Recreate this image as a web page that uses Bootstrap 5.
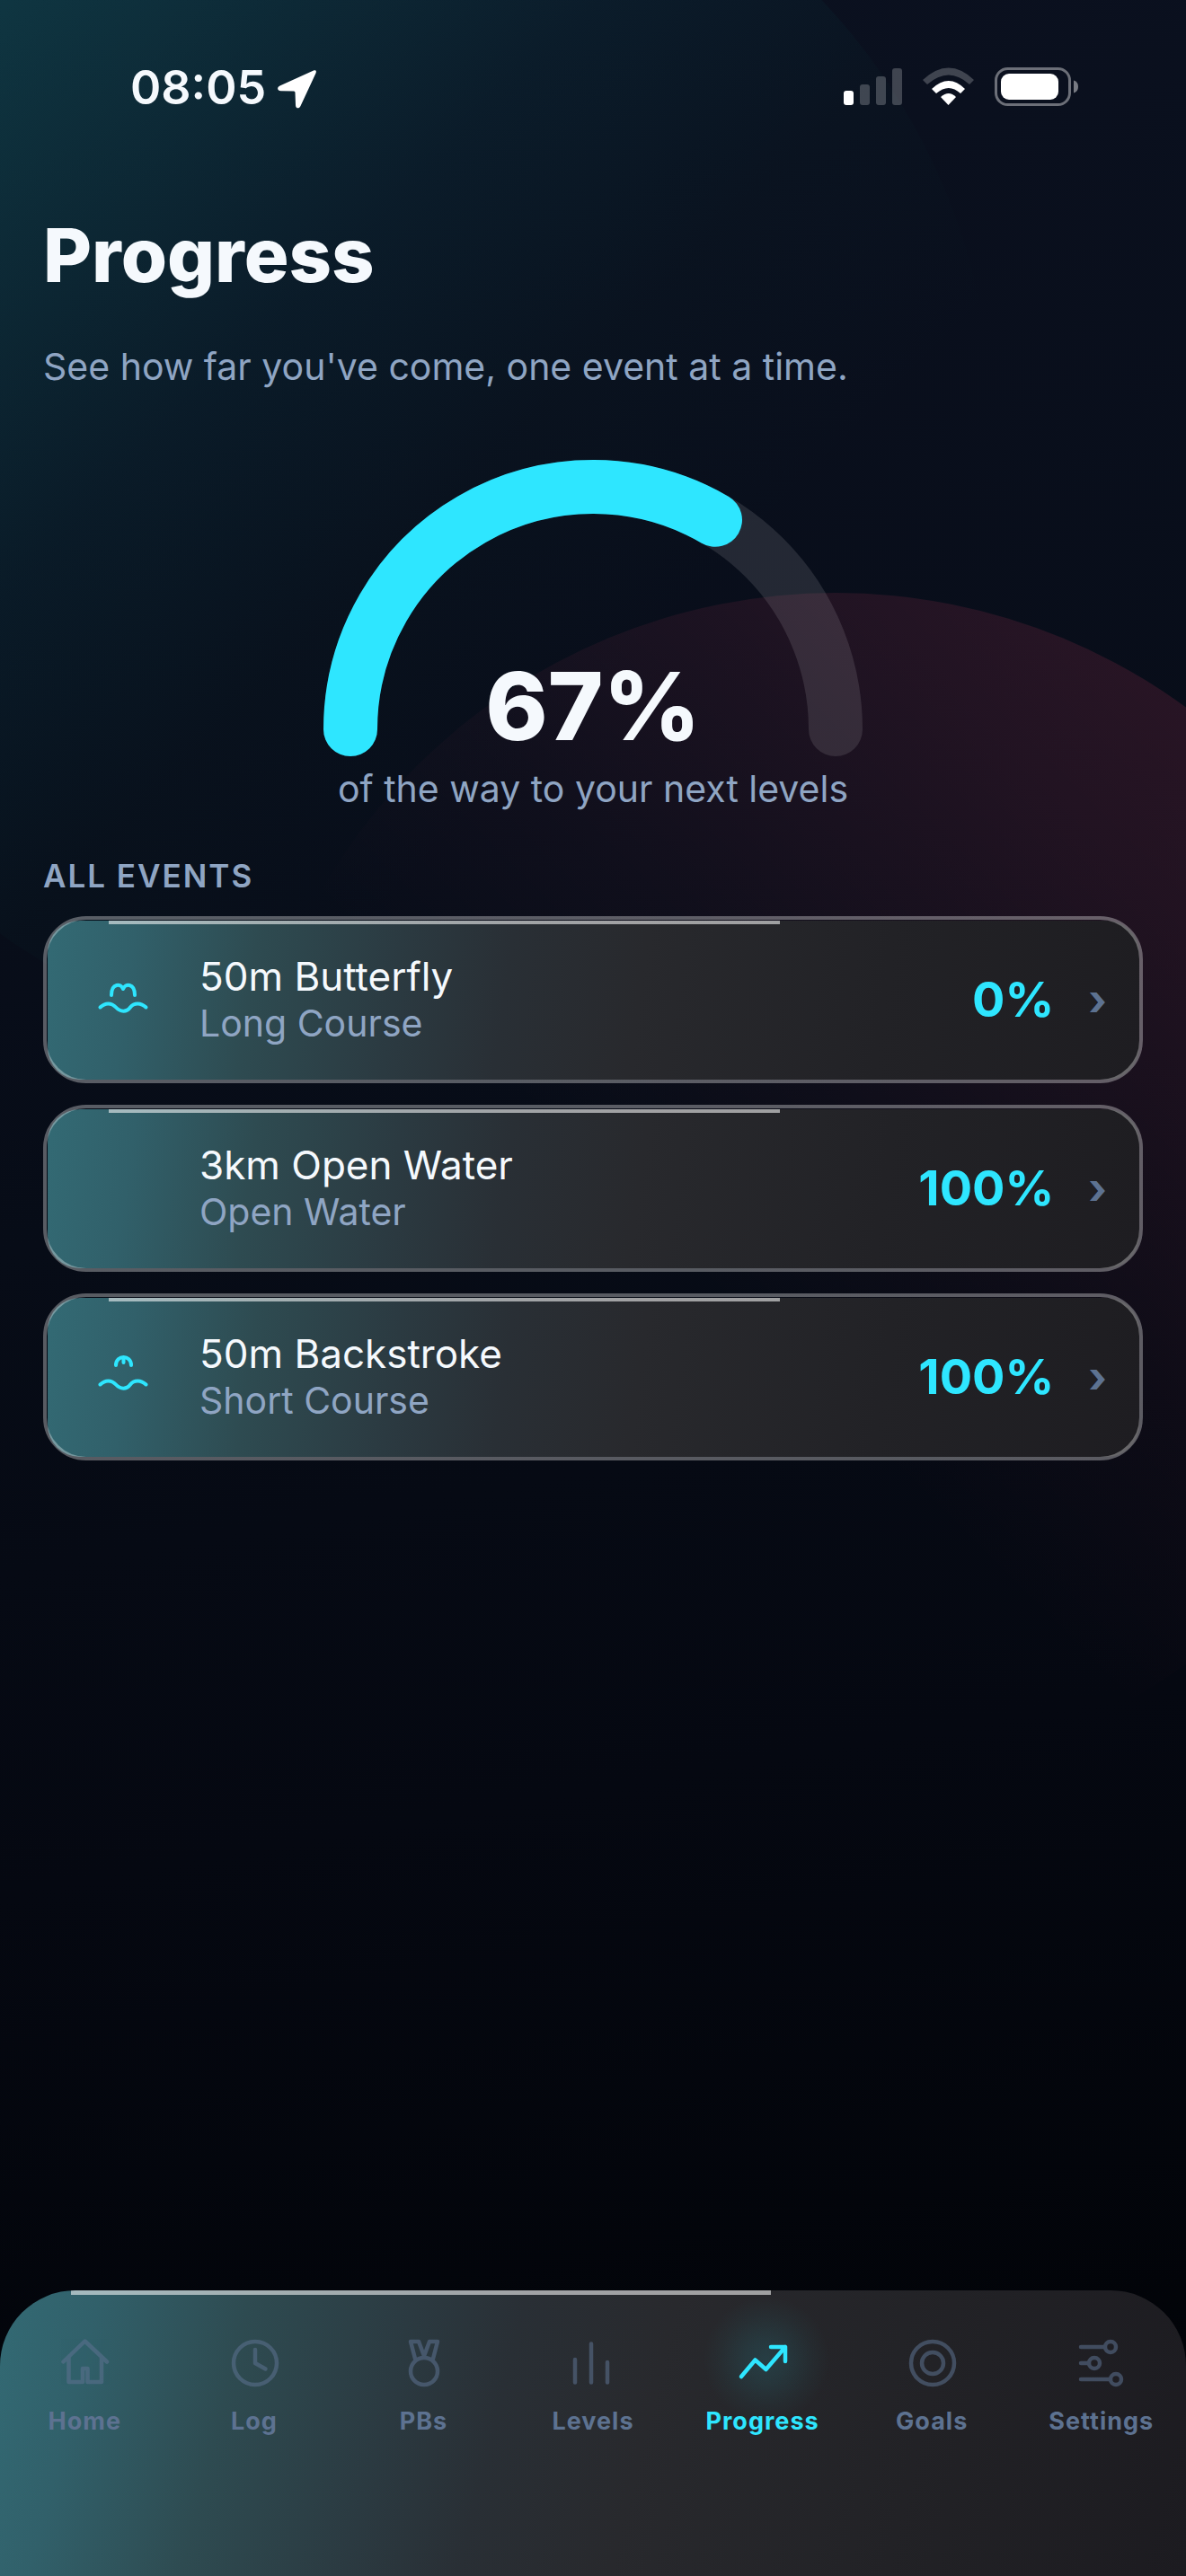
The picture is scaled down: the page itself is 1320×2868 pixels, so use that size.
<!DOCTYPE html>
<html lang="en">
<head>
<meta charset="utf-8">
<meta name="viewport" content="width=device-width, initial-scale=1">
<title>Progress</title>
<link rel="stylesheet" href="https://cdn.jsdelivr.net/npm/bootstrap@5.3.0/dist/css/bootstrap.min.css">
<script src="https://cdn.jsdelivr.net/npm/bootstrap@5.3.0/dist/js/bootstrap.bundle.min.js"></script>
<style>
:root { --ink: #f5f9fd; --soft: #8fa5c3; --dim: #5d7291; --cyan: #2ee6ff; }
body { font-family: Inter, "Liberation Sans", sans-serif; color: var(--ink); background: #020308; }
.screen { min-height: 100vh; overflow: hidden; background: linear-gradient(170deg, #0b1120 0%, #070c17 45%, #050811 68%, #020409 90%, #010205 100%); }
.orb { position: absolute; border-radius: 50%; pointer-events: none; }
.orb-teal { width: 1390px; height: 1390px; left: -285px; top: -217px; background: linear-gradient(135deg, rgba(30,190,190,.32) 0%, rgba(30,190,190,.21) 18%, rgba(15,130,140,.1) 42%, rgba(0,90,80,.045) 56%, rgba(0,60,60,0) 70%); }
.orb-red { width: 1320px; height: 1320px; right: -270px; top: 660px; background: linear-gradient(225deg, rgba(255,70,110,.17) 0%, rgba(255,70,110,.1) 25%, rgba(255,70,110,.03) 46%, rgba(255,70,110,0) 60%); }
.statusbar { padding: 74px 116px 0 145px; }
.clock { font-size: 52px; line-height: 48px; font-weight: 600; margin-right: 12px; }
.page-title { font-size: 83px; line-height: 100px; font-weight: 800; margin: 112px 0 44px; }
.copy { font-size: 41px; line-height: 60px; color: var(--soft); }
.side { padding-left: 48px; padding-right: 48px; }
.gauge { width: 600px; margin-top: 62px; margin-bottom: 4px; }
.gauge-value { font-size: 105px; line-height: 116px; font-weight: 800; }
.section-title { font-size: 35px; line-height: 48px; font-weight: 600; letter-spacing: 2px; color: var(--soft); margin: 43px 0 21px; }
.events { gap: 24px; }
.event { height: 186px; color: var(--ink); padding: 0 40px 0 56px; }
.event::before { content: ""; position: absolute; inset: 5px 4px 4px 5px; border-radius: 36px; background: linear-gradient(rgba(255,255,255,.56), rgba(255,255,255,.56)) 68px 0 / 61.500% 4px no-repeat, linear-gradient(98deg, #336a74 0%, #31606a 8%, #2e4b51 19%, #2b3a41 32%, #292f35 42%, #28292d 54%, #222226 76%, #1e1d21 100%); }
.event::after { content: ""; position: absolute; inset: 0; border: 4px solid rgba(255,255,255,.33); border-radius: 48px; }
.event > * { position: relative; z-index: 1; }
.event-icon { width: 66px; height: 66px; margin-right: 52px; color: var(--cyan); }
.event-name { font-size: 44px; line-height: 52px; }
.event-course { font-size: 41px; line-height: 52px; color: var(--soft); }
.event-pct { font-size: 54px; line-height: 60px; font-weight: 700; color: var(--cyan); }
.event-chevron { font-size: 48px; line-height: 60px; font-weight: 700; color: var(--dim); margin-left: 38px; }
.stroke-art { fill: none; stroke: currentColor; stroke-linecap: round; stroke-linejoin: round; }
.tabs { height: 318px; border-radius: 84px 84px 0 0; padding-top: 42px; overflow: hidden; background: linear-gradient(104deg, #336a74 0%, #31606a 8%, #2e4b51 20%, #2b3a41 33%, #292f35 42%, #28292d 54%, #222226 76%, #1c1b20 100%); }
.tabs::before { content: ""; position: absolute; top: 0; left: 6%; width: 59%; height: 5px; background: rgba(255,255,255,.56); }
.tab { color: var(--dim); width: 0; font-size: 27px; line-height: 32px; font-weight: 700; letter-spacing: 1px; }
.tab svg { width: 78px; height: 78px; opacity: .55; margin-bottom: 10px; }
.tab.on { color: var(--cyan); }
.tab.on svg { opacity: 1; position: relative; }
.glow { position: absolute; width: 160px; height: 160px; top: -45px; left: 50%; margin-left: -76px; background: radial-gradient(circle, rgba(46,230,255,.12) 0%, rgba(46,230,255,.09) 20%, rgba(46,230,255,.03) 45%, rgba(46,230,255,0) 62%); }
</style>
</head>
<body>
<div class="screen position-relative d-flex flex-column">
  <div class="orb orb-teal"></div>
  <div class="orb orb-red"></div>

  <header class="statusbar position-relative d-flex align-items-center justify-content-between">
    <div class="d-flex align-items-center">
      <span class="clock">08:05</span>
      <svg width="46" height="48" viewBox="0 0 46 48" fill="#fff" aria-hidden="true"><path d="M41 4.500 3.500 21.500C0 23 .5 27 4.500 27.200L19 27.500Q20.500 27.500 20.500 29L21 43C21 47 25 47.500 26.500 44L43.500 7.500C44.500 4.500 43.500 3.500 41 4.500Z"/></svg>
    </div>
    <svg width="266" height="48" viewBox="0 0 266 48" aria-hidden="true">
      <rect x="1" y="27" width="11" height="16" rx="3" fill="#fff"/>
      <g fill="#fff" fill-opacity=".22"><rect x="19" y="20" width="11" height="23" rx="3"/><rect x="37" y="11" width="11" height="32" rx="3"/><rect x="55" y="2" width="11" height="41" rx="3"/></g>
      <path d="M89 15Q118-12 146 15L141 20Q118-1 94 20Z" fill="#fff" fill-opacity=".22"/>
      <path d="M99 25Q118 7 136 25L131 30Q118 18 104 30Z" fill="#fff"/>
      <path d="M109 34Q118 26 126 34L117.500 43Z" fill="#fff"/>
      <rect x="170.500" y="2.500" width="82" height="40" rx="13" fill="none" stroke="#fff" stroke-opacity=".4" stroke-width="3"/>
      <rect x="176" y="8" width="64" height="29" rx="9" fill="#fff"/>
      <path d="M257 15.500Q262 17 262 22.500T257 29.500Z" fill="#fff" fill-opacity=".45"/>
    </svg>
  </header>

  <main class="side position-relative flex-grow-1">
    <h1 class="page-title">Progress</h1>
    <p class="copy mb-0">See how far you've come, one event at a time.</p>

    <section class="text-center">
      <div class="gauge mx-auto position-relative">
        <svg class="d-block w-100" viewBox="0 0 600 344" fill="none" stroke-width="60" stroke-linecap="round" role="img" aria-label="67 percent">
          <path d="M30 312A270 270 0 0 1 570 312" stroke="#fff" stroke-opacity=".11"/>
          <path d="M30 312A270 270 0 0 1 436 78.800" stroke="#2ee6ff"/>
        </svg>
        <div class="gauge-value position-absolute bottom-0 start-0 w-100">67%</div>
      </div>
      <p class="copy mb-0">of the way to your next levels</p>
    </section>

    <h2 class="section-title">ALL EVENTS</h2>
    <div class="events d-flex flex-column">
      <a href="#butterfly" class="event position-relative d-flex align-items-center text-decoration-none">
        <svg class="event-icon stroke-art" viewBox="0 0 66 66" stroke-width="4" aria-hidden="true"><path d="M7.500 41.500C13 36 20 36 25 41.500S37 47 41 41.500 53 36 58.500 41.500M20 28C20 14 31 15 33 21 35 15 46 14 46 28"/></svg>
        <div class="flex-grow-1"><div class="event-name">50m Butterfly</div><div class="event-course">Long Course</div></div>
        <span class="event-pct">0%</span><span class="event-chevron" aria-hidden="true">›</span>
      </a>
      <a href="#open-water" class="event position-relative d-flex align-items-center text-decoration-none">
        <span class="event-icon"></span>
        <div class="flex-grow-1"><div class="event-name">3km Open Water</div><div class="event-course">Open Water</div></div>
        <span class="event-pct">100%</span><span class="event-chevron" aria-hidden="true">›</span>
      </a>
      <a href="#backstroke" class="event position-relative d-flex align-items-center text-decoration-none">
        <svg class="event-icon stroke-art" viewBox="0 0 66 66" stroke-width="4" aria-hidden="true"><path d="M7.500 41.500C13 36 20 36 25 41.500S37 47 41 41.500 53 36 58.500 41.500M25 20C25 8 42 8 42 20M33.500 13V17"/></svg>
        <div class="flex-grow-1"><div class="event-name">50m Backstroke</div><div class="event-course">Short Course</div></div>
        <span class="event-pct">100%</span><span class="event-chevron" aria-hidden="true">›</span>
      </a>
    </div>
  </main>

  <nav class="tabs position-relative d-flex" aria-label="Main">
    <a href="#home" class="tab flex-fill d-flex flex-column align-items-center text-decoration-none"><svg class="stroke-art" viewBox="0 0 78 78" stroke-width="4.500" aria-hidden="true"><path d="M15.500 37.500 39.500 14.500 64 37.500M21.500 32V60H37V45H42.500V60H58V32"/></svg>Home</a>
    <a href="#log" class="tab flex-fill d-flex flex-column align-items-center text-decoration-none"><svg class="stroke-art" viewBox="0 0 78 78" stroke-width="4.500" aria-hidden="true"><circle cx="40" cy="39" r="24"/><path d="M40 24V39L51.500 45.500"/></svg>Log</a>
    <a href="#pbs" class="tab flex-fill d-flex flex-column align-items-center text-decoration-none"><svg class="stroke-art" viewBox="0 0 78 78" stroke-width="4.500" aria-hidden="true"><circle cx="40" cy="48" r="15"/><path d="M30 34 25 15H34L40 31 46 15H55L50 34"/></svg>PBs</a>
    <a href="#levels" class="tab flex-fill d-flex flex-column align-items-center text-decoration-none"><svg class="stroke-art" viewBox="0 0 78 78" stroke-width="4.500" aria-hidden="true"><path d="M19 35V60.500M37 17.500V60.500M55 38V60.500"/></svg>Levels</a>
    <a href="#progress" class="tab on flex-fill d-flex flex-column align-items-center text-decoration-none position-relative" aria-current="page"><span class="glow"></span><svg class="stroke-art" viewBox="0 0 78 78" stroke-width="4.500" aria-hidden="true"><path d="M15 54 30.500 35.500 42.500 46 64 21M48 21H64V37"/></svg>Progress</a>
    <a href="#goals" class="tab flex-fill d-flex flex-column align-items-center text-decoration-none"><svg class="stroke-art" viewBox="0 0 78 78" stroke-width="4.500" aria-hidden="true"><circle cx="40" cy="39" r="24"/><circle cx="40" cy="39" r="12"/></svg>Goals</a>
    <a href="#settings" class="tab flex-fill d-flex flex-column align-items-center text-decoration-none"><svg class="stroke-art" viewBox="0 0 78 78" stroke-width="4.500" aria-hidden="true"><path d="M16 21H42M16 39H24M16 57H48"/><circle cx="49" cy="21" r="6"/><circle cx="31" cy="39" r="6"/><circle cx="55" cy="57" r="6"/></svg>Settings</a>
  </nav>
</div>
</body>
</html>
